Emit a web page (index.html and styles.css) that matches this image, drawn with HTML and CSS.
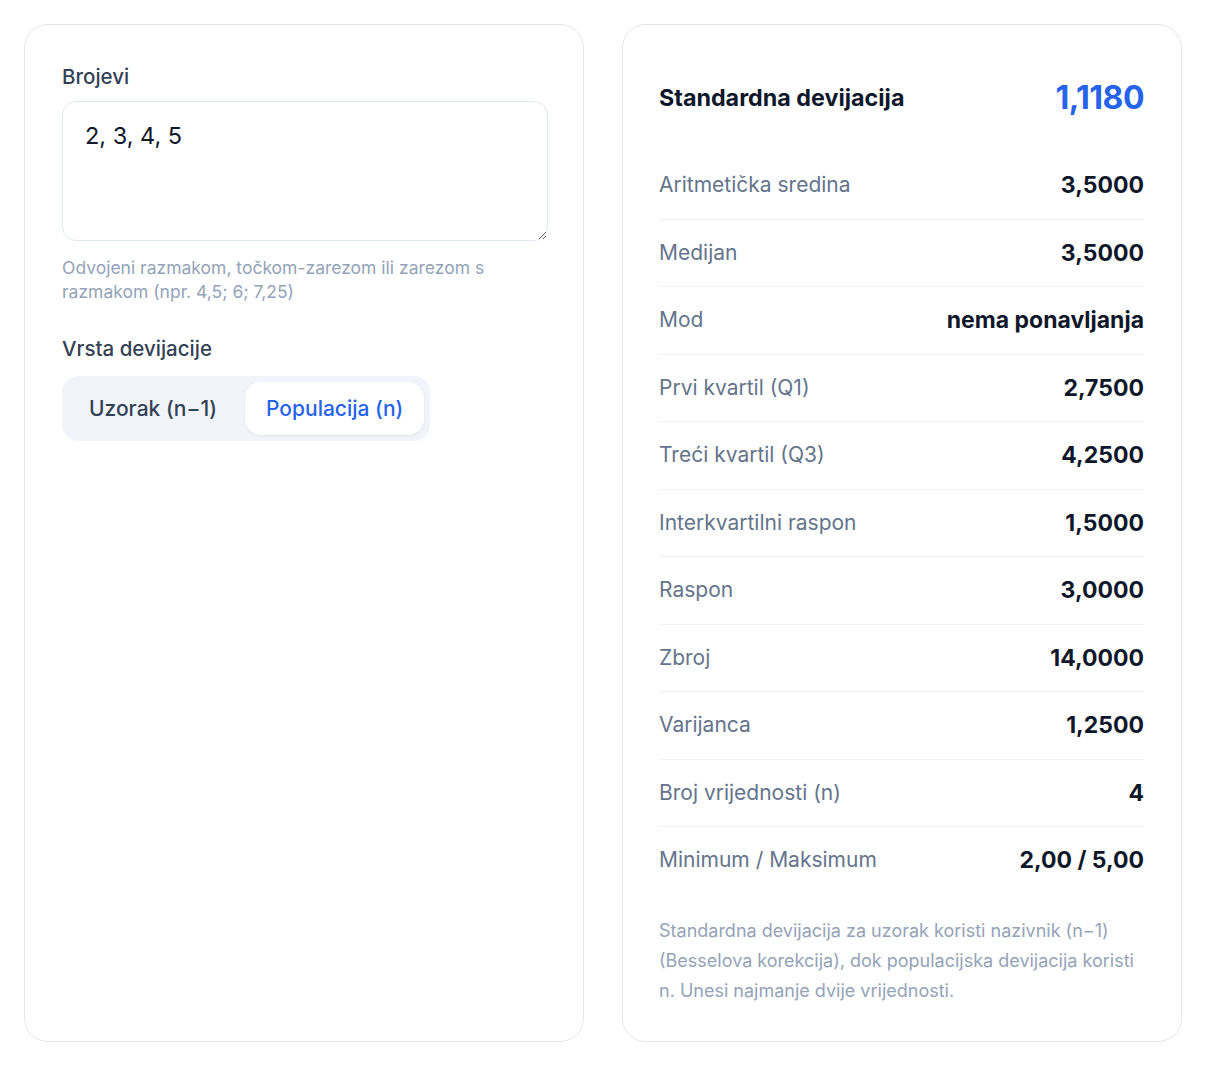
FILE: index.html
```html
<!DOCTYPE html>
<html lang="hr">
<head>
  <meta charset="utf-8">
  <title>Standardna devijacija</title>
  <meta name="viewport" content="width=device-width, initial-scale=1">
  <link rel="stylesheet" href="styles.css">
</head>
<body>
  <div class="layout">
    <!-- unos podataka -->
    <div class="card input-card">
      <label class="field-label" for="numbers">Brojevi</label>
      <textarea id="numbers" class="numbers">2, 3, 4, 5</textarea>
      <p class="hint">Odvojeni razmakom, točkom-zarezom ili zarezom s razmakom (npr. 4,5; 6; 7,25)</p>

      <div class="field-label type-label">Vrsta devijacije</div>
      <div class="segmented">
        <button class="seg">Uzorak (n−1)</button>
        <button class="seg active">Populacija (n)</button>
      </div>
    </div>

    <!-- rezultati -->
    <div class="card result-card">
      <div class="result-head">
        <span class="result-title">Standardna devijacija</span>
        <span class="result-value">1,1180</span>
      </div>

      <div class="stats">
        <div class="stat"><span class="stat-name">Aritmetička sredina</span><span class="stat-val">3,5000</span></div>
        <div class="stat"><span class="stat-name">Medijan</span><span class="stat-val">3,5000</span></div>
        <div class="stat"><span class="stat-name">Mod</span><span class="stat-val">nema ponavljanja</span></div>
        <div class="stat"><span class="stat-name">Prvi kvartil (Q1)</span><span class="stat-val">2,7500</span></div>
        <div class="stat"><span class="stat-name">Treći kvartil (Q3)</span><span class="stat-val">4,2500</span></div>
        <div class="stat"><span class="stat-name">Interkvartilni raspon</span><span class="stat-val">1,5000</span></div>
        <div class="stat"><span class="stat-name">Raspon</span><span class="stat-val">3,0000</span></div>
        <div class="stat"><span class="stat-name">Zbroj</span><span class="stat-val">14,0000</span></div>
        <div class="stat"><span class="stat-name">Varijanca</span><span class="stat-val">1,2500</span></div>
        <div class="stat"><span class="stat-name">Broj vrijednosti (n)</span><span class="stat-val">4</span></div>
        <div class="stat"><span class="stat-name">Minimum / Maksimum</span><span class="stat-val">2,00 / 5,00</span></div>
      </div>

      <p class="note">Standardna devijacija za uzorak koristi nazivnik (n−1) (Besselova korekcija), dok populacijska devijacija koristi n. Unesi najmanje dvije vrijednosti.</p>
    </div>
  </div>
</body>
</html>
```

FILE: styles.css
```css
body {
	margin: 0;
	padding: 0;
	background: #ffffff;
	color: #0f172a;
	font-family: Inter, 'Noto Sans', Arial, sans-serif;
}

.layout {
	display: grid;
	grid-template-columns: 1fr 1fr;
	gap: 38px;
	padding: 24px;
}

.card {
	border: 1px solid #e5e7eb;
	border-radius: 24px;
	padding: 36px 37px 35px 36px;
	background: #fff;
}

.input-card {
	padding-left: 37px;
	padding-right: 35px;
}

/* lijeva kartica */
.field-label {
	display: block;
	margin-top: 2px;
	font-size: 20.5px;
	line-height: 28px;
	font-weight: 500;
	color: #334155;
}

.numbers {
	display: block;
	box-sizing: border-box;
	width: 100%;
	height: 140px;
	margin-top: 10px;
	padding: 18px 22px;
	border: 1px solid #e2e8f0;
	border-radius: 14px;
	font-family: inherit;
	font-size: 23.5px;
	line-height: 32px;
	color: #0f172a;
	resize: vertical;
	outline: none;
}

.hint {
	margin: 15px 0 0;
	font-size: 17.5px;
	line-height: 24px;
	color: #94a3b8;
}

.type-label {
	margin-top: 31px;
}

.segmented {
	display: inline-flex;
	gap: 7px;
	margin-top: 13px;
	padding: 6px;
	background: #f1f5f9;
	border-radius: 16px;
}

.seg {
	border: 0;
	background: transparent;
	height: 53px;
	padding: 0 21px;
	border-radius: 16px;
	font-family: inherit;
	font-size: 21px;
	font-weight: 500;
	color: #334155;
	cursor: pointer;
}

.seg.active {
	background: #fff;
	color: #2563eb;
	box-shadow: 0 1px 3px rgba(15, 23, 42, 0.08);
}

/* desna kartica */
.result-head {
	display: flex;
	justify-content: space-between;
	align-items: center;
	margin-top: 16px;
	height: 40px;
}

.result-title {
	font-size: 23.3px;
	font-weight: 700;
	color: #0f172a;
}

.result-value {
	font-size: 32px;
	font-weight: 700;
	color: #2563eb;
	letter-spacing: -0.5px;
}

.stats {
	margin-top: 35px;
}

.stat {
	display: flex;
	justify-content: space-between;
	align-items: center;
	padding: 20px 0;
	line-height: 26.5px;
	border-bottom: 1px solid #eef2f6;
}

.stat:last-child {
	border-bottom: 0;
}

.stat-name {
	font-size: 21px;
	color: #64748b;
}

.stat-val {
	font-size: 23px;
	font-weight: 700;
	color: #0f172a;
}

.note {
	margin: 22px 0 0;
	font-size: 18px;
	line-height: 30px;
	color: #94a3b8;
}
```
